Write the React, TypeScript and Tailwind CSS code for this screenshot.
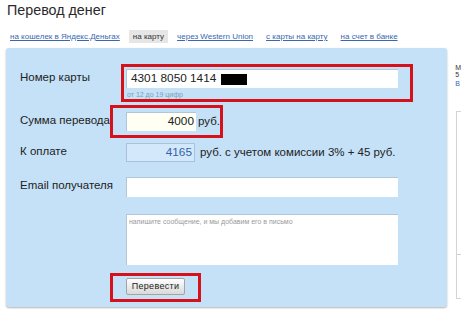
import React from "react";

export default function App() {
  const font = { fontFamily: '"Liberation Sans", Arial, sans-serif' };
  return (
    <div
      className="w-[461px] h-[320px] overflow-hidden bg-white text-[#222]"
      style={font}
    >
      <div className="pl-[7px] pt-[1px] text-[14.3px] leading-[18px] text-[#2a2a2a]">
        Перевод денег
      </div>
      <div className="mt-[11px] ml-[6px] flex items-center gap-[5px] text-[8px] leading-[13px]">
        <span className="px-[4px] text-[#3a67b0] underline">на кошелек в Яндекс.Деньгах</span>
        <span className="px-[4px] bg-[#e6e6e6] text-[#333]">на карту</span>
        <span className="px-[4px] text-[#3a67b0] underline">через Western Union</span>
        <span className="px-[4px] text-[#3a67b0] underline">с карты на карту</span>
        <span className="px-[4px] text-[#3a67b0] underline">на счет в банке</span>
      </div>
      <div className="mt-[5px] flex">
        <div className="relative ml-[6px] w-[442px] rounded-[3px] bg-[#c5e1f7] pl-[14px] pt-[21px] pb-[12px] shadow-[0_1px_2px_rgba(0,0,0,0.3)]">
          {/* card number */}
          <div className="flex">
            <div className="w-[106px] text-[11.5px] leading-[16px]">Номер карты</div>
            <div>
              <div className="flex h-[19px] w-[272px] items-center border-t border-l border-[#b3c6d8] bg-white pl-[4px] text-[11.8px]">
                4301 8050 1414
                <span className="ml-[5px] inline-block h-[11px] w-[26px] bg-black" />
              </div>
              <div className="mt-[2px] pl-[1px] text-[7px] leading-[9px] text-[#7d9bb8]">от 12 до 19 цифр</div>
            </div>
          </div>
          {/* sum */}
          <div className="mt-[13px] flex">
            <div className="w-[106px] text-[11.5px] leading-[16px]">Сумма перевода</div>
            <div className="flex items-center">
              <div className="flex h-[19px] w-[70px] items-center justify-end border-t border-l border-[#b3c6d8] bg-[#fffff4] pr-[2px] text-[11.8px]">
                4000
              </div>
              <span className="ml-[2px] text-[11.5px]">руб.</span>
            </div>
          </div>
          {/* pay */}
          <div className="mt-[12px] flex">
            <div className="w-[106px] text-[11.5px] leading-[16px]">К оплате</div>
            <div className="flex items-center">
              <div className="flex h-[19px] w-[69px] items-center justify-end border border-[#a8c2da] bg-[#d3e9fb] pr-[2px] text-[11.8px] text-[#3562a8]">
                4165
              </div>
              <span className="ml-[5px] text-[11.5px]">руб. с учетом комиссии 3% + 45 руб.</span>
            </div>
          </div>
          {/* email */}
          <div className="mt-[15px] flex">
            <div className="w-[106px] text-[11.5px] leading-[16px]">Email получателя</div>
            <div className="h-[20px] w-[272px] border-t border-l border-[#b3c6d8] bg-white" />
          </div>
          {/* message */}
          <div className="mt-[17px] flex">
            <div className="w-[106px]" />
            <div className="h-[51px] w-[272px] border-t border-l border-[#b3c6d8] bg-white pl-[2px] pt-[2px] text-[7px] leading-[9px] text-[#9a9a9a]">
              напишите сообщение, и мы добавим его в письмо
            </div>
          </div>
          {/* button */}
          <div className="mt-[13px] flex">
            <div className="w-[106px]" />
            <div className="flex h-[17px] w-[59px] items-center justify-center rounded-[2px] border border-[#a4a4a4] bg-gradient-to-b from-white to-[#d9d9d9] text-[9px] tracking-[0.3px] text-[#222]">
              Перевести
            </div>
          </div>

          {/* red annotation boxes */}
          <div className="absolute left-[115px] top-[16px] h-[38px] w-[292px] border-[3px] border-[#d5121c]" />
          <div className="absolute left-[104px] top-[57px] h-[33px] w-[113px] border-[3px] border-[#d5121c]" />
          <div className="absolute left-[104px] top-[225px] h-[29px] w-[91px] border-[3px] border-[#d5121c]" />
        </div>
        <div className="ml-[8px] flex-1 pt-[16px] text-[7px] leading-[7px] text-[#333]">
          <div>М</div>
          <div>5</div>
          <div className="mt-[2px] text-[#3a67b0]">В</div>
          <div className="mt-[24px] ml-[1px] h-[188px] border-l border-t border-b border-[#d4d4d4]">
            <div className="h-[143px] border-b border-[#cfcfcf]" />
          </div>
        </div>
      </div>
    </div>
  );
}
